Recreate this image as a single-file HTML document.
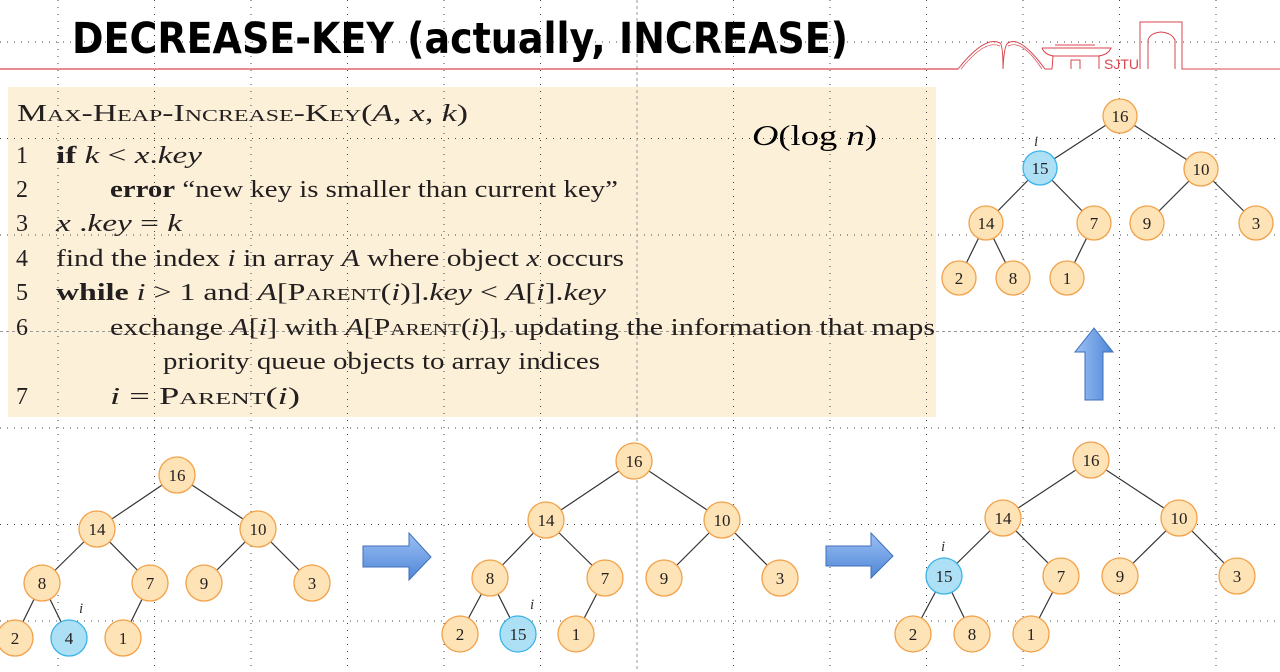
<!DOCTYPE html>
<html><head><meta charset="utf-8"><style>
html,body{margin:0;padding:0;background:#fff;width:1280px;height:672px;overflow:hidden}
svg{display:block}
.s{font-family:"Liberation Serif",serif;font-size:24px;fill:#231f20}
.n{font-family:"Liberation Serif",serif;font-size:17px;fill:#231f20;text-anchor:middle}
.sc{font-variant:small-caps}
</style></head><body>
<svg width="1280" height="672" viewBox="0 0 1280 672" xmlns="http://www.w3.org/2000/svg">
<defs>
<linearGradient id="ag" x1="0" y1="0" x2="0" y2="1"><stop offset="0" stop-color="#9cc0f5"/><stop offset="1" stop-color="#4f86d6"/></linearGradient>
<linearGradient id="agv" x1="0" y1="0" x2="1" y2="0"><stop offset="0" stop-color="#9cc0f5"/><stop offset="1" stop-color="#4f86d6"/></linearGradient>
</defs>
<rect x="8" y="87" width="928" height="330" fill="#fdf0d8"/>
<g stroke="#444" stroke-width="1" stroke-dasharray="1 6">
<line x1="0" y1="42" x2="1280" y2="42"/><line x1="0" y1="138.5" x2="1280" y2="138.5"/><line x1="0" y1="235" x2="1280" y2="235"/><line x1="0" y1="428" x2="1280" y2="428"/><line x1="0" y1="524.5" x2="1280" y2="524.5"/><line x1="0" y1="621" x2="1280" y2="621"/>
<line x1="58" y1="0" x2="58" y2="672"/><line x1="154.5" y1="0" x2="154.5" y2="672"/><line x1="251" y1="0" x2="251" y2="672"/><line x1="347.5" y1="0" x2="347.5" y2="672"/><line x1="444" y1="0" x2="444" y2="672"/><line x1="540.5" y1="0" x2="540.5" y2="672"/><line x1="733.5" y1="0" x2="733.5" y2="672"/><line x1="830" y1="0" x2="830" y2="672"/><line x1="926.5" y1="0" x2="926.5" y2="672"/><line x1="1023" y1="0" x2="1023" y2="672"/><line x1="1119.5" y1="0" x2="1119.5" y2="672"/><line x1="1216" y1="0" x2="1216" y2="672"/>
</g>
<g stroke="#999" stroke-width="1" stroke-dasharray="3 3">
<line x1="637" y1="0" x2="637" y2="672"/><line x1="0" y1="331.5" x2="1280" y2="331.5"/>
</g>
<text x="72" y="53" font-family="'DejaVu Sans','Liberation Sans',sans-serif" font-weight="bold" font-size="43" textLength="776" lengthAdjust="spacingAndGlyphs" fill="#000">DECREASE-KEY (actually, INCREASE)</text>
<line x1="0" y1="69" x2="958" y2="69" stroke="#d9474f" stroke-width="1.3"/>
<g fill="none" stroke="#d9474f" stroke-width="1">
<path d="M957 69 L958 69 Q985 35 1000 43 Q1003 45 1003 69 M1003 69 Q1004 45 1008 43 Q1020 35 1045 69 L1052 69"/>
<path d="M961 69 Q985 39 1000 46 M1008 46 Q1022 39 1042 69" stroke-width="0.7"/>
<path d="M1052 69 L1053 56 L1099 56 L1099 69 M1042 48 L1111 48 Q1108 55 1098 56 L1054 56 Q1045 55 1042 48 M1055 45 L1095 45 M1071 69 L1071 60 L1080 60 L1080 69"/>
<path d="M1140 69 L1140 22 L1182 22 L1182 69 L1280 69 M1148 69 L1148 40 Q1150 33 1161 32 Q1172 33 1175 40 L1175 69"/>
</g>
<text x="1104" y="69" font-family="'Liberation Sans',sans-serif" font-size="14" fill="#d9474f">SJTU</text>
<text x="17" y="121" class="s" textLength="451" lengthAdjust="spacingAndGlyphs"><tspan class="sc">Max-Heap-Increase-Key</tspan>(<tspan font-style="italic">A</tspan>, <tspan font-style="italic">x</tspan>, <tspan font-style="italic">k</tspan>)</text>
<g class="s">
<text x="16" y="163">1</text><text x="16" y="197">2</text><text x="16" y="231">3</text><text x="16" y="266">4</text><text x="16" y="300">5</text><text x="16" y="335">6</text><text x="16" y="404">7</text>
<text x="56" y="163" textLength="146" lengthAdjust="spacingAndGlyphs"><tspan font-weight="bold">if</tspan> <tspan font-style="italic">k</tspan>  &lt;  <tspan font-style="italic">x</tspan>.<tspan font-style="italic">key</tspan></text>
<text x="110" y="197" textLength="508" lengthAdjust="spacingAndGlyphs"><tspan font-weight="bold">error</tspan> “new key is smaller than current key”</text>
<text x="56" y="231" textLength="126" lengthAdjust="spacingAndGlyphs"><tspan font-style="italic">x</tspan> .<tspan font-style="italic">key</tspan>  =  <tspan font-style="italic">k</tspan></text>
<text x="56" y="266" textLength="568" lengthAdjust="spacingAndGlyphs">find the index <tspan font-style="italic">i</tspan> in array <tspan font-style="italic">A</tspan> where object <tspan font-style="italic">x</tspan> occurs</text>
<text x="56" y="300" textLength="550" lengthAdjust="spacingAndGlyphs"><tspan font-weight="bold">while</tspan> <tspan font-style="italic">i</tspan> &gt; 1 and <tspan font-style="italic">A</tspan>[<tspan class="sc">Parent</tspan>(<tspan font-style="italic">i</tspan>)].<tspan font-style="italic">key</tspan> &lt; <tspan font-style="italic">A</tspan>[<tspan font-style="italic">i</tspan>].<tspan font-style="italic">key</tspan></text>
<text x="110" y="335" textLength="825" lengthAdjust="spacingAndGlyphs">exchange <tspan font-style="italic">A</tspan>[<tspan font-style="italic">i</tspan>] with <tspan font-style="italic">A</tspan>[<tspan class="sc">Parent</tspan>(<tspan font-style="italic">i</tspan>)], updating the information that maps</text>
<text x="163" y="369" textLength="437" lengthAdjust="spacingAndGlyphs">priority queue objects to array indices</text>
<text x="110" y="404" textLength="190" lengthAdjust="spacingAndGlyphs"><tspan font-style="italic">i</tspan>  =  <tspan class="sc">Parent</tspan>(<tspan font-style="italic">i</tspan>)</text>
</g>
<text x="752" y="145" font-family="'Liberation Serif',serif" font-size="29" fill="#000" textLength="125" lengthAdjust="spacingAndGlyphs"><tspan font-style="italic">O</tspan>(log <tspan font-style="italic">n</tspan>)</text>
<path d="M363 546 L409 546 L409 533 L431 557 L409 580 L409 567 L363 567 Z" fill="url(#ag)" stroke="#3f6fb8" stroke-width="1"/>
<path d="M826 546 L871 546 L871 533 L893 556 L871 578 L871 566 L826 566 Z" fill="url(#ag)" stroke="#3f6fb8" stroke-width="1"/>
<path d="M1085 400 L1085 352 L1075 352 L1094 328 L1113 352 L1103 352 L1103 400 Z" fill="url(#agv)" stroke="#3f6fb8" stroke-width="1"/>
<g stroke="#333" stroke-width="1.2">
<line x1="177" y1="475" x2="97" y2="529"/><line x1="177" y1="475" x2="258" y2="529"/><line x1="97" y1="529" x2="42" y2="583"/><line x1="97" y1="529" x2="150" y2="583"/><line x1="258" y1="529" x2="204" y2="583"/><line x1="258" y1="529" x2="312" y2="583"/><line x1="42" y1="583" x2="15" y2="638"/><line x1="42" y1="583" x2="69" y2="638"/><line x1="150" y1="583" x2="123" y2="638"/>
<line x1="634" y1="461" x2="546" y2="520"/><line x1="634" y1="461" x2="722" y2="520"/><line x1="546" y1="520" x2="490" y2="578"/><line x1="546" y1="520" x2="605" y2="578"/><line x1="722" y1="520" x2="664" y2="578"/><line x1="722" y1="520" x2="780" y2="578"/><line x1="490" y1="578" x2="460" y2="634"/><line x1="490" y1="578" x2="518" y2="634"/><line x1="605" y1="578" x2="576" y2="634"/>
<line x1="1091" y1="460" x2="1003" y2="518"/><line x1="1091" y1="460" x2="1179" y2="518"/><line x1="1003" y1="518" x2="944" y2="576"/><line x1="1003" y1="518" x2="1061" y2="576"/><line x1="1179" y1="518" x2="1120" y2="576"/><line x1="1179" y1="518" x2="1237" y2="576"/><line x1="944" y1="576" x2="913" y2="634"/><line x1="944" y1="576" x2="972" y2="634"/><line x1="1061" y1="576" x2="1031" y2="634"/>
<line x1="1120" y1="116" x2="1040" y2="168"/><line x1="1120" y1="116" x2="1201" y2="169"/><line x1="1040" y1="168" x2="986" y2="223"/><line x1="1040" y1="168" x2="1094" y2="223"/><line x1="1201" y1="169" x2="1147" y2="223"/><line x1="1201" y1="169" x2="1256" y2="223"/><line x1="986" y1="223" x2="959" y2="278"/><line x1="986" y1="223" x2="1013" y2="278"/><line x1="1094" y1="223" x2="1067" y2="278"/>
</g>
<g fill="#fde3b5" stroke="#f2a14a" stroke-width="1.3">
<circle cx="177" cy="475" r="18"/><circle cx="97" cy="529" r="18"/><circle cx="258" cy="529" r="18"/><circle cx="42" cy="583" r="18"/><circle cx="150" cy="583" r="18"/><circle cx="204" cy="583" r="18"/><circle cx="312" cy="583" r="18"/><circle cx="15" cy="638" r="18"/><circle cx="123" cy="638" r="18"/>
<circle cx="634" cy="461" r="18"/><circle cx="546" cy="520" r="18"/><circle cx="722" cy="520" r="18"/><circle cx="490" cy="578" r="18"/><circle cx="605" cy="578" r="18"/><circle cx="664" cy="578" r="18"/><circle cx="780" cy="578" r="18"/><circle cx="460" cy="634" r="18"/><circle cx="576" cy="634" r="18"/>
<circle cx="1091" cy="460" r="18"/><circle cx="1003" cy="518" r="18"/><circle cx="1179" cy="518" r="18"/><circle cx="1061" cy="576" r="18"/><circle cx="1120" cy="576" r="18"/><circle cx="1237" cy="576" r="18"/><circle cx="913" cy="634" r="18"/><circle cx="972" cy="634" r="18"/><circle cx="1031" cy="634" r="18"/>
<circle cx="1120" cy="116" r="17"/><circle cx="1201" cy="169" r="17"/><circle cx="986" cy="223" r="17"/><circle cx="1094" cy="223" r="17"/><circle cx="1147" cy="223" r="17"/><circle cx="1256" cy="223" r="17"/><circle cx="959" cy="278" r="17"/><circle cx="1013" cy="278" r="17"/><circle cx="1067" cy="278" r="17"/>
</g>
<g fill="#aee0f5" stroke="#3bb4e8" stroke-width="1.3">
<circle cx="69" cy="638" r="18"/><circle cx="518" cy="634" r="18"/><circle cx="944" cy="576" r="18"/><circle cx="1040" cy="168" r="17"/>
</g>
<g class="n">
<text x="177" y="481">16</text><text x="97" y="535">14</text><text x="258" y="535">10</text><text x="42" y="589">8</text><text x="150" y="589">7</text><text x="204" y="589">9</text><text x="312" y="589">3</text><text x="15" y="644">2</text><text x="69" y="644">4</text><text x="123" y="644">1</text>
<text x="634" y="467">16</text><text x="546" y="526">14</text><text x="722" y="526">10</text><text x="490" y="584">8</text><text x="605" y="584">7</text><text x="664" y="584">9</text><text x="780" y="584">3</text><text x="460" y="640">2</text><text x="518" y="640">15</text><text x="576" y="640">1</text>
<text x="1091" y="466">16</text><text x="1003" y="524">14</text><text x="1179" y="524">10</text><text x="944" y="582">15</text><text x="1061" y="582">7</text><text x="1120" y="582">9</text><text x="1237" y="582">3</text><text x="913" y="640">2</text><text x="972" y="640">8</text><text x="1031" y="640">1</text>
<text x="1120" y="122">16</text><text x="1040" y="174">15</text><text x="1201" y="175">10</text><text x="986" y="229">14</text><text x="1094" y="229">7</text><text x="1147" y="229">9</text><text x="1256" y="229">3</text><text x="959" y="284">2</text><text x="1013" y="284">8</text><text x="1067" y="284">1</text>
</g>
<g font-family="'Liberation Serif',serif" font-style="italic" font-size="15" fill="#333">
<text x="79" y="613">i</text><text x="530" y="609">i</text><text x="941" y="551">i</text><text x="1034" y="146">i</text>
</g>
</svg>
</body></html>
